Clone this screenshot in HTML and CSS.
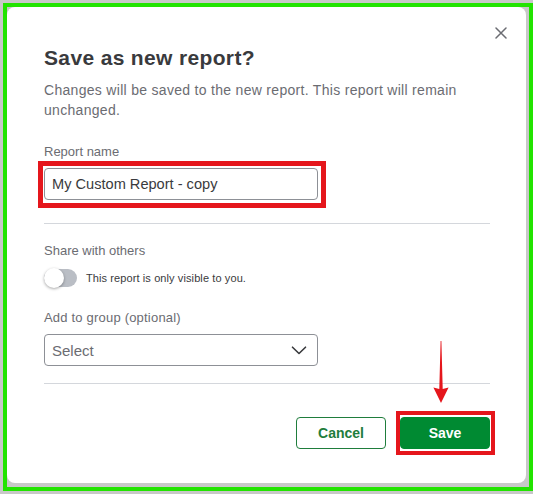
FILE: index.html
```html
<!DOCTYPE html>
<html lang="en">
<head>
<meta charset="utf-8">
<title>Save as new report?</title>
<link rel="stylesheet" href="styles.css">
</head>
<body>
<div class="page">
  <div class="modal" role="dialog" aria-labelledby="dlg-title">
    <button class="close" aria-label="Close">
      <svg viewBox="0 0 12 12" width="12" height="12"><path d="M1 1 L11 11 M11 1 L1 11" stroke="#6b6c72" stroke-width="1.5" stroke-linecap="round" fill="none"/></svg>
    </button>
    <h1 class="title" id="dlg-title">Save as new report?</h1>
    <p class="desc">Changes will be saved to the new report. This report will remain unchanged.</p>

    <div class="field first">
      <div class="label">Report name</div>
      <div class="input-wrap">
        <div class="input">My Custom Report - copy</div>
        <span class="callout callout-input"></span>
      </div>
    </div>

    <div class="divider"></div>

    <div class="field share">
      <div class="label">Share with others</div>
      <div class="toggle-row">
        <span class="toggle"><span class="knob"></span></span>
        <span class="toggle-text">This report is only visible to you.</span>
      </div>
    </div>

    <div class="field group">
      <div class="label label-wide">Add to group (optional)</div>
      <div class="select">
        <span class="placeholder">Select</span>
        <svg class="chevron" viewBox="0 0 16 9" width="16" height="9"><path d="M1.5 1.2 L8 7.5 L14.5 1.2" stroke="#393a3d" stroke-width="1.6" stroke-linecap="round" stroke-linejoin="round" fill="none"/></svg>
      </div>
    </div>

    <div class="divider bottom"></div>

    <div class="actions">
      <button class="btn btn-secondary">Cancel</button>
      <span class="save-wrap">
        <button class="btn btn-primary">Save</button>
        <span class="callout callout-save"></span>
      </span>
    </div>
  </div>

  <div class="frame"></div>
  <svg class="arrow" viewBox="0 0 22 70" width="22" height="70">
    <polygon points="10.6,3 11.4,3 12.7,51 18.6,49.5 11,65 3.4,49.5 9.3,51" fill="#e5161c"/>
  </svg>
</div>
</body>
</html>
```
FILE: styles.css
```css
* { box-sizing: border-box; }

html, body {
  margin: 0;
  padding: 0;
}

body {
  font-family: "Liberation Sans", Arial, sans-serif;
  background: #c8c8c8;
}

.page {
  position: relative;
  width: 533px;
  height: 494px;
  padding: 7px 7px 0 7px;
  background: #c8c8c8;
  overflow: hidden;
}

.modal {
  position: relative;
  width: 519px;
  background: #ffffff;
  border-radius: 8px;
  padding: 37px 36px 34px 37px;
}

.close {
  position: absolute;
  top: 19px;
  right: 18px;
  width: 14px;
  height: 14px;
  padding: 1px;
  border: 0;
  background: none;
  display: flex;
  align-items: center;
  justify-content: center;
}

.title {
  margin: 0;
  font-size: 21px;
  line-height: 28px;
  font-weight: 700;
  letter-spacing: 0.35px;
  color: #393a3d;
}

.desc {
  margin: 8px 0 0 0;
  font-size: 14px;
  line-height: 20px;
  letter-spacing: 0.3px;
  color: #6b6c72;
}

.field.first { margin-top: 24px; }
.field.share { margin-top: 19px; }
.field.group { margin-top: 22px; }

.label {
  font-size: 13px;
  line-height: 16px;
  color: #6b6c72;
}

.label-wide { letter-spacing: 0.2px; }

.input-wrap {
  position: relative;
  margin-top: 8px;
  width: 274px;
}

.input {
  height: 32px;
  border: 1px solid #8d9096;
  border-radius: 4px;
  padding: 0 8px 0 7px;
  font-size: 14.6px;
  line-height: 30px;
  color: #393a3d;
}

.callout {
  position: absolute;
  border-style: solid;
  border-color: #e5161c;
  pointer-events: none;
}

.callout-input {
  left: -6px;
  top: -7px;
  width: 288px;
  height: 47px;
  border-width: 5px;
}

.divider {
  margin-top: 23px;
  height: 1px;
  background: #d4d7dc;
}

.divider.bottom { margin-top: 17px; }

.toggle-row {
  margin-top: 9px;
  height: 20px;
  display: flex;
  align-items: center;
}

.toggle {
  width: 33px;
  height: 18px;
  border-radius: 9px;
  background: #babec5;
  display: flex;
  align-items: center;
}

.knob {
  width: 20px;
  height: 20px;
  border-radius: 50%;
  background: #ffffff;
  box-shadow: 0 1px 3px rgba(0, 0, 0, 0.35);
}

.toggle-text {
  margin-left: 9px;
  font-size: 11px;
  letter-spacing: 0.1px;
  color: #393a3d;
}

.select {
  margin-top: 8px;
  width: 274px;
  height: 32px;
  border: 1px solid #8d9096;
  border-radius: 4px;
  padding: 0 10px 0 7px;
  display: flex;
  align-items: center;
  justify-content: space-between;
}

.placeholder {
  font-size: 15px;
  color: #6b6c72;
}

.actions {
  margin-top: 33px;
  display: flex;
  justify-content: flex-end;
  gap: 14px;
}

.btn {
  width: 90px;
  height: 32px;
  border-radius: 4px;
  font-family: "Liberation Sans", Arial, sans-serif;
  font-size: 14px;
  font-weight: 700;
  padding: 0;
}

.btn-secondary {
  background: #ffffff;
  border: 1px solid #1f7d3c;
  color: #1f7d3c;
}

.btn-primary {
  background: #008a32;
  border: 1px solid #008a32;
  color: #ffffff;
}

.save-wrap {
  position: relative;
  display: block;
}

.callout-save {
  left: -4px;
  top: -6px;
  width: 99px;
  height: 44px;
  border-width: 4px;
}

.frame {
  position: absolute;
  left: 3px;
  top: 3px;
  width: 530px;
  height: 488px;
  border: 4px solid #22e400;
  pointer-events: none;
}

.arrow {
  position: absolute;
  left: 430px;
  top: 338px;
  pointer-events: none;
}
```
